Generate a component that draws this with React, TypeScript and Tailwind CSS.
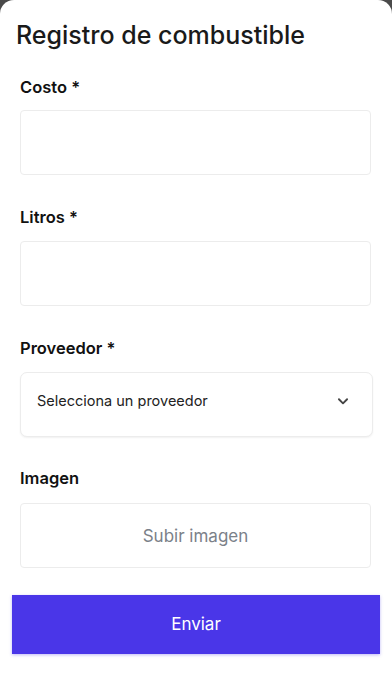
import React from "react";

export default function App() {
  return (
    <div className="h-[696px] w-full bg-[#4a4a4a]" style={{ fontFamily: "Inter, 'Noto Sans', sans-serif" }}>
      <div className="h-full w-full rounded-t-[14px] bg-white flex flex-col">
        <h1 className="pl-4 pt-[20px] text-[25px] leading-[30px] font-medium text-[#1a1a1a]">Registro de combustible</h1>

        <div className="px-5 pt-[27px] flex flex-col">
          <label className="text-[16.5px] leading-[20px] font-semibold text-[#111]">Costo *</label>
          <div className="mt-[13px] h-[65px] w-[351px] rounded-[4px] border border-[#ececec] bg-white"></div>

          <label className="mt-[32px] text-[16.5px] leading-[20px] font-semibold text-[#111]">Litros *</label>
          <div className="mt-[14px] h-[65px] w-[351px] rounded-[4px] border border-[#ececec] bg-white"></div>

          <label className="mt-[32px] text-[16.5px] leading-[20px] font-semibold text-[#111]">Proveedor *</label>
          <div className="mt-[14px] h-[65px] w-[353px] rounded-[7px] border border-[#ececec] bg-white shadow-[0_1px_2px_rgba(0,0,0,0.06)] flex items-center justify-between pl-[16px] pr-[22px]">
            <span className="text-[14.5px] leading-[20px] -mt-[7px] text-[#222]">Selecciona un proveedor</span>
            <svg className="-mt-[7px]" width="14" height="14" viewBox="0 0 24 24" fill="none" stroke="#444" strokeWidth="3.2" strokeLinecap="round" strokeLinejoin="round">
              <path d="M5 9l7 7 7-7" />
            </svg>
          </div>

          <label className="mt-[31px] text-[16.5px] leading-[20px] font-semibold text-[#111]">Imagen</label>
          <div className="mt-[15px] h-[65px] w-[351px] rounded-[4px] border border-[#ececec] bg-white flex items-center justify-center">
            <span className="text-[17px] leading-[20px] text-[#7b8189]">Subir imagen</span>
          </div>
        </div>

        <div className="px-3 pt-[27px]">
          <button className="h-[59px] w-[368px] bg-[#4a36e8] text-white text-[17px] leading-[20px] shadow-[0_1px_3px_rgba(74,54,232,0.35)] flex items-center justify-center pb-[1px]">
            Enviar
          </button>
        </div>
      </div>
    </div>
  );
}
